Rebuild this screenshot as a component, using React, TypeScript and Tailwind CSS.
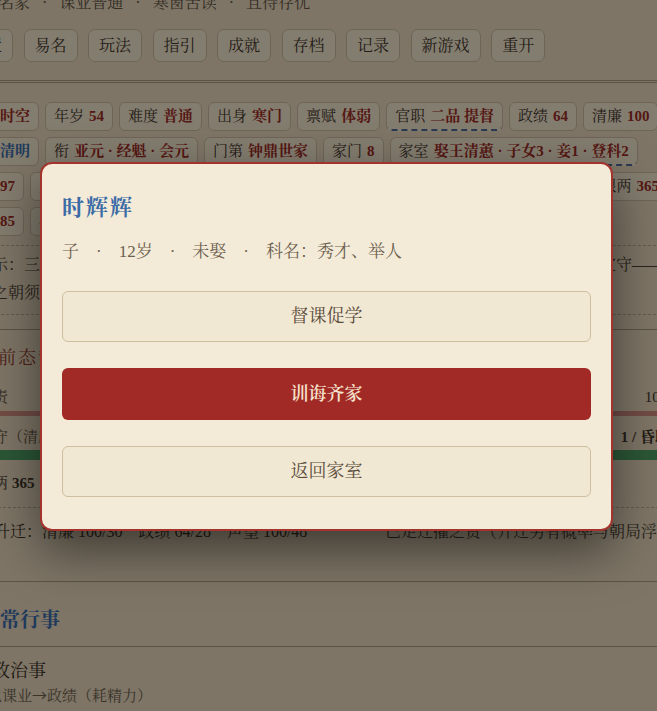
import React from "react";

const serif = "font-['Liberation_Serif','Noto_Serif_CJK_SC','Noto_Sans_CJK_SC',serif]";

type Stat = { label: string; value: string; tone?: "red" | "blue"; dashed?: boolean };

const navItems = ["设置", "易名", "玩法", "指引", "成就", "存档", "记录", "新游戏", "重开"];

const statRows: Stat[][] = [
  [
    { label: "天时", value: "时空" },
    { label: "年岁", value: "54" },
    { label: "难度", value: "普通" },
    { label: "出身", value: "寒门" },
    { label: "禀赋", value: "体弱" },
    { label: "官职", value: "二品 提督", dashed: true },
    { label: "政绩", value: "64" },
    { label: "清廉", value: "100" },
  ],
  [
    { label: "世道", value: "清明", tone: "blue" },
    { label: "衔", value: "亚元 · 经魁 · 会元" },
    { label: "门第", value: "钟鼎世家" },
    { label: "家门", value: "8" },
    { label: "家室", value: "娶王清蕙 · 子女3 · 妾1 · 登科2", dashed: true },
  ],
];

const StatTag: React.FC<{ stat: Stat; className?: string }> = ({ stat, className = "" }) => (
  <div
    className={`flex h-[29px] shrink-0 items-center gap-[5px] whitespace-nowrap rounded-[6px] border border-[#cbb99d] bg-[#efe3cb] px-[8px] text-[15px] ${
      stat.dashed ? "border-b-2 border-b-[#4f6b96] [border-bottom-style:dashed]" : ""
    } ${className}`}
  >
    <span>{stat.label}</span>
    <span className={`font-bold ${stat.tone === "blue" ? "text-[#3a6aa8]" : "text-[#9b2c25]"}`}>{stat.value}</span>
  </div>
);

const ChildDialog: React.FC = () => (
  <div className="absolute inset-0 flex items-start bg-black/45 pl-[40px] pt-[162px]">
    <div className="w-[573px] rounded-[12px] border-2 border-[#a3332d] bg-[#f3ead7] px-5 pt-[28px] pb-[32px] shadow-[0_20px_50px_rgba(0,0,0,0.5)]">
      <h2 className="text-[22px] font-bold leading-[32px] tracking-[2px] text-[#3b6ba6]">时辉辉</h2>
      <div className="mt-[16px] flex items-center text-[17px] leading-[24px] text-[#6d604f]">
        <span>子</span>
        <span className="mx-[17px]">·</span>
        <span>12岁</span>
        <span className="mx-[17px]">·</span>
        <span>未娶</span>
        <span className="mx-[17px]">·</span>
        <span>科名：秀才、举人</span>
      </div>
      <div className="mt-[27px] flex flex-col gap-[26px]">
        <button className="h-[51px] rounded-md border border-[#cdbf9f] bg-[#f1e8d3] text-[18px] text-[#5b4c3c]">督课促学</button>
        <button className="h-[52px] rounded-md bg-[#a22a26] text-[18px] font-semibold text-[#f6e4cf]">训诲齐家</button>
        <button className="h-[51px] rounded-md border border-[#cdbf9f] bg-[#f1e8d3] text-[18px] text-[#5b4c3c]">返回家室</button>
      </div>
    </div>
  </div>
);

export default function App() {
  return (
    <div className={`relative h-[711px] w-[657px] overflow-hidden bg-[#e6d6ba] text-[#3f352b] ${serif}`}>
      <div className="-ml-[44px] w-[760px]">
        {/* header: meta line + actions */}
        <header className="border-b-[3px] border-double border-[#a99878] pb-[18px]">
          <div className="-mt-[9px] ml-[10px] flex items-center gap-[12px] text-[16px] leading-[24px] text-[#5e5242]">
            <span>书香名家</span>
            <span>·</span>
            <span>课业普通</span>
            <span>·</span>
            <span>寒窗苦读</span>
            <span>·</span>
            <span>且待存优</span>
          </div>
          <nav className="mt-[14px] ml-[3px] flex gap-[10.5px]">
            {navItems.map((n) => (
              <button
                key={n}
                className="h-[33px] shrink-0 rounded-[7px] border border-[#c6b899] bg-[#efe4cd] px-[10px] text-[16px] text-[#3f352b]"
              >
                {n}
              </button>
            ))}
          </nav>
        </header>

        {/* status tags */}
        <div className="flex flex-col gap-[6px] pt-[19px]">
          {statRows.map((row, i) => (
            <div key={i} className="flex gap-[6px]">
              {row.map((s) => (
                <StatTag key={s.label} stat={s} />
              ))}
            </div>
          ))}
          <div className="flex w-[712px] gap-[6px]">
            <StatTag stat={{ label: "精力", value: "97" }} />
            <StatTag stat={{ label: "声望", value: "100" }} />
            <StatTag stat={{ label: "才学", value: "72" }} />
            <StatTag stat={{ label: "人脉", value: "42" }} />
            <StatTag stat={{ label: "银两", value: "365" }} className="ml-auto" />
          </div>
          <div className="flex gap-[6px]">
            <StatTag stat={{ label: "体魄", value: "85" }} />
            <StatTag stat={{ label: "心境", value: "平和" }} />
          </div>
        </div>

        <div className="mt-[9px] border-y border-dashed border-[#b3a48b] pt-[5px] pb-[7px] pl-[20px] text-[16px] leading-[28px] text-[#4a4034]">
          <p className="whitespace-nowrap">提示：三年一考，考满方得迁转。清廉、政绩、声望三者须各达其数，方可上疏求迁，亦宜守——</p>
          <p className="whitespace-nowrap">今之朝须慎言慎行，方保无虞。</p>
        </div>

        {/* current standing */}
        <section className="mt-[14px] border-y border-[#a8977c] px-[22px] pt-[14px] pb-[37px]">
          <h3 className="text-[18px] leading-[28px] tracking-[2px] text-[#8e3b30]">当前态势</h3>
          <div className="mt-[13px] flex justify-between text-[15px] leading-[24px]">
            <span className="text-[#5e5242]">职责</span>
            <span>100/150</span>
          </div>
          <div className="mt-[2px] h-[5px] bg-[#d08a7e]" />
          <div className="mt-[9px] flex justify-between text-[15px] leading-[24px]">
            <span className="text-[#5e5242]">操守（清廉）</span>
            <span className="mr-[24px] font-bold">
              清廉<span className="ml-[12px]">1 / 昏聩</span>
            </span>
          </div>
          <div className="mt-[1px] h-[10px] bg-[#4f9e63]" />
          <div className="mt-[11px] flex gap-[4px] text-[15px] leading-[24px]">
            <span>银两</span>
            <span className="font-bold">365</span>
          </div>
          <div className="mt-[12px] flex border-t border-dashed border-[#b3a48b] pt-[12px] text-[16px] leading-[24px]">
            <div className="flex w-[407px] shrink-0 gap-[16px] whitespace-nowrap">
              <span>待升迁：清廉 100/30</span>
              <span>政绩 64/28</span>
              <span>声望 100/48</span>
            </div>
            <span className="whitespace-nowrap text-[#4a4034]">已足迁擢之资（升迁另有概率与朝局浮动）</span>
          </div>
        </section>

        {/* daily actions */}
        <div className="border-b border-[#a8977c] pl-[24px] pt-[24px] pb-[12px]">
          <h3 className="text-[20px] font-bold leading-[28px] text-[#3a6aa8]">日常行事</h3>
        </div>
        <div className="pt-[11px]">
          <div className="pl-[18px] text-[18px] leading-[26px] text-[#3a3128]">勤政治事</div>
          <div className="pl-[16px] text-[15px] leading-[22px] text-[#6b5e4d]">
            转化课业<span className="font-['Noto_Sans_CJK_SC',sans-serif]">→</span>政绩（耗精力）
          </div>
        </div>
      </div>

      <ChildDialog />
    </div>
  );
}
